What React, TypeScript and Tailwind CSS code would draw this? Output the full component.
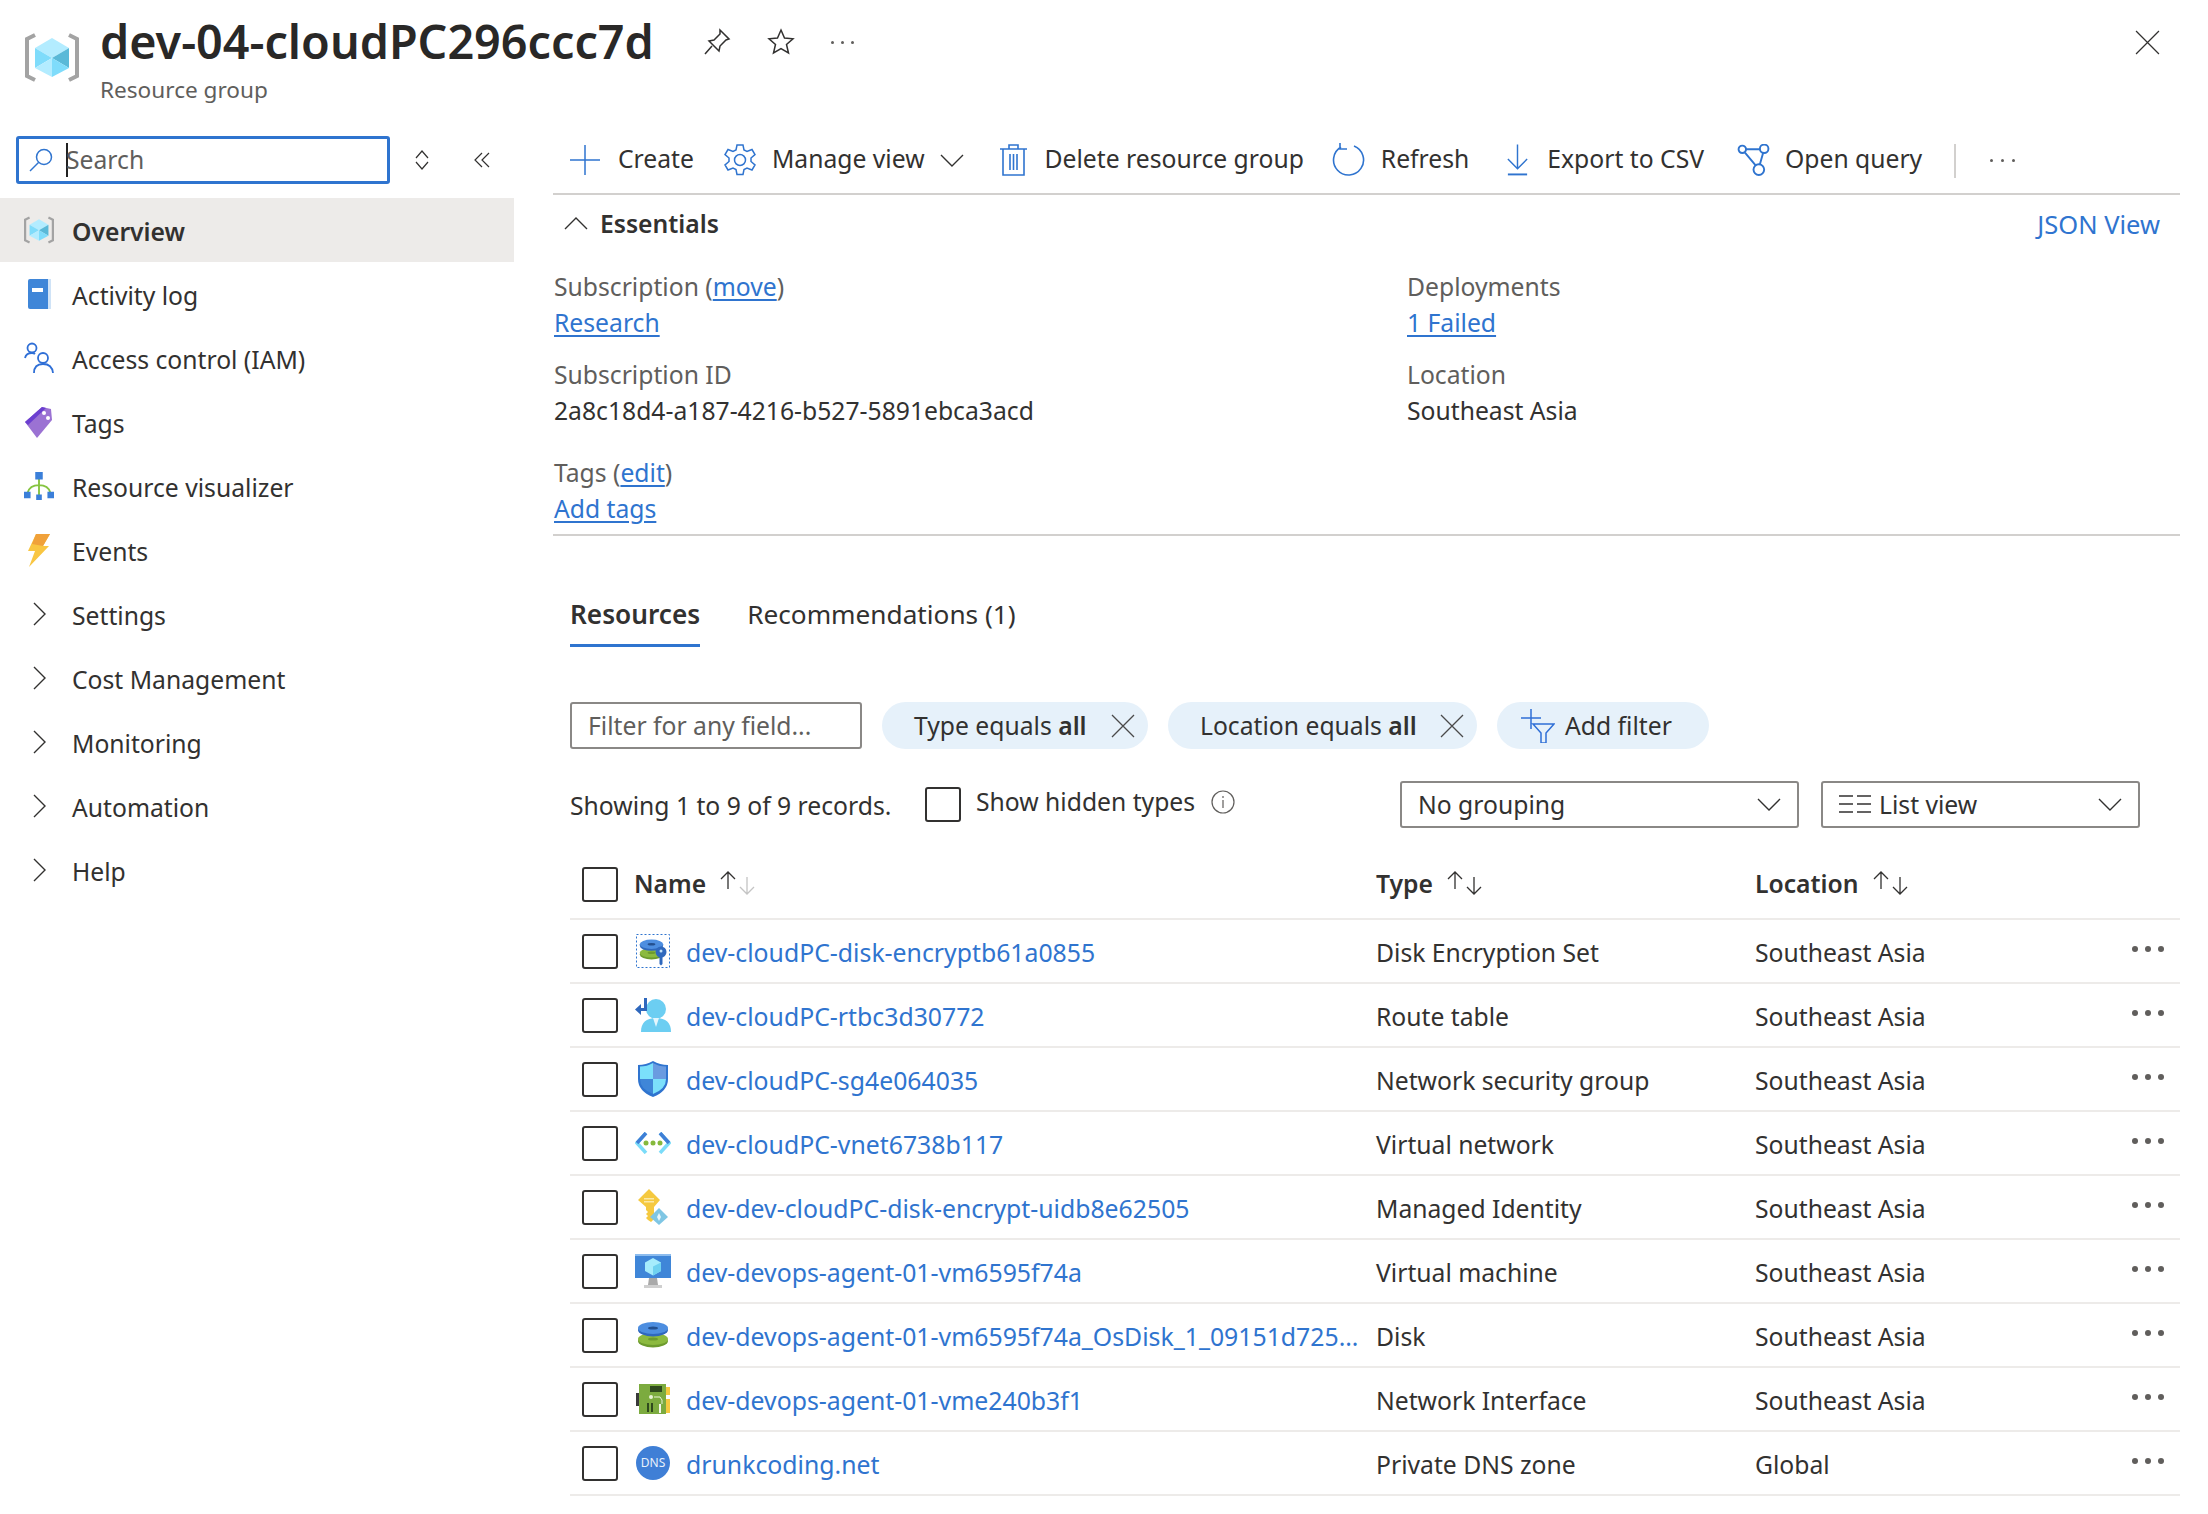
import type { ReactNode } from "react";

const blue = "#2f74cf";

const Chevron = ({ dir, className }: { dir: "right" | "down" | "up"; className: string }) => {
  const d = dir === "right" ? "M1 1l11 11L1 23" : dir === "down" ? "M1 1l11 11L23 1" : "M1 12L12 1l11 11";
  const box = dir === "right" ? "0 0 13 24" : "0 0 24 13";
  return (
    <svg viewBox={box} className={className} fill="none" stroke="currentColor" strokeWidth="1.4">
      <path d={d} />
    </svg>
  );
};

const GroupIcon = ({ className }: { className: string }) => (
  <svg viewBox="0 0 54 49" className={className}>
    <path d="M10 2L2 6v37l8 4M44 2l8 4v37l-8 4" fill="none" stroke="#a3a3a3" strokeWidth="4" />
    <path d="M27 5l17 10-17 10-17-10z" fill="#b3ecff" />
    <path d="M44 15v20L27 25z" fill="#5ab9d8" />
    <path d="M10 15v20l17-10z" fill="#7fdcfb" />
    <path d="M10 35l17 9V25z" fill="#b3ecff" />
    <path d="M44 35l-17 9V25z" fill="#7fdcfb" />
  </svg>
);

const BookIcon = () => (
  <svg viewBox="0 0 24 30" className="h-[30px] w-[24px]">
    <path d="M1 2q0-2 2-2h20v30H3q-2 0-2-2z" fill="#3f86d8" />
    <path d="M21 0h3v30h-3z" fill="#cfe3f7" />
    <path d="M5 9h11v4H5z" fill="#fff" />
  </svg>
);

const PeopleIcon = () => (
  <svg viewBox="0 0 30 32" className="h-[32px] w-[30px]" fill="none" stroke="#2f6fd6" strokeWidth="1.8">
    <circle cx="8" cy="6" r="4.5" />
    <circle cx="19" cy="16" r="5" />
    <path d="M1 16q1-5 7-5 2 0 3 1M10 31q0-9 9-9t10 9" />
  </svg>
);

const TagIcon = () => (
  <svg viewBox="0 0 28 31" className="h-[31px] w-[28px]">
    <path d="M0 15L17 0l9 2 1 11-15 18z" fill="#9b72d3" />
    <path d="M0 15L17 0l4 1L3 18z" fill="#6b3fd0" />
    <circle cx="19" cy="6" r="2" fill="#fff" />
    <circle cx="23" cy="11" r="2" fill="#fff" />
  </svg>
);

const VisualizerIcon = () => (
  <svg viewBox="0 0 32 30" className="h-[30px] w-[32px]">
    <path d="M16 6v20M4 22q2-8 12-8t12 8" fill="none" stroke="#86c440" strokeWidth="2" />
    <path d="M12 0h8v8h-8zM0 21h7v7H0zM25 21h7v7h-7zM13 24h6v6h-6z" fill="#3b7fd9" />
  </svg>
);

const BoltIcon = () => (
  <svg viewBox="0 0 22 33" className="h-[33px] w-[22px]">
    <path d="M8 0h14l-7 12h6L1 33l6-16H0z" fill="#f9c642" />
    <path d="M8 0h14l-7 12-11-2z" fill="#f0a13a" />
  </svg>
);

const nav: { label: string; icon?: ReactNode; active?: boolean }[] = [
  { label: "Overview", icon: <GroupIcon className="h-[28px] w-[30px]" />, active: true },
  { label: "Activity log", icon: <BookIcon /> },
  { label: "Access control (IAM)", icon: <PeopleIcon /> },
  { label: "Tags", icon: <TagIcon /> },
  { label: "Resource visualizer", icon: <VisualizerIcon /> },
  { label: "Events", icon: <BoltIcon /> },
  { label: "Settings" },
  { label: "Cost Management" },
  { label: "Monitoring" },
  { label: "Automation" },
  { label: "Help" },
];

const DiskShape = () => (
  <>
    <ellipse cx="16" cy="21" rx="15" ry="6.5" fill="#6d9b2e" />
    <ellipse cx="16" cy="19" rx="15" ry="6" fill="#8cba3f" />
    <ellipse cx="16" cy="19" rx="5" ry="1.6" fill="#6d9b2e" />
    <ellipse cx="16" cy="10" rx="15" ry="6.5" fill="#2f68bd" />
    <ellipse cx="16" cy="8" rx="15" ry="6" fill="#4d8ee0" />
    <ellipse cx="16" cy="8" rx="5" ry="1.6" fill="#24508f" />
  </>
);

const rowIcons: ReactNode[] = [
  <svg viewBox="0 0 34 34" className="h-[34px] w-[34px]" key="enc">
    <rect x="0.5" y="0.5" width="33" height="33" fill="none" stroke="#2f74cf" strokeDasharray="2 2" />
    <g transform="translate(3 4) scale(0.78)">
      <DiskShape />
    </g>
    <circle cx="25" cy="18" r="5.5" fill="#2f68bd" />
    <path d="M23.5 22h3v8l-1.5 1.5-1.5-1.5z" fill="#2f68bd" />
    <circle cx="25" cy="17" r="1.5" fill="#bfe0fa" />
  </svg>,
  <svg viewBox="0 0 36 34" className="h-[34px] w-[36px]" key="rt">
    <circle cx="21" cy="11" r="10" fill="#6ccef2" />
    <path d="M6 34q0-14 15-14t15 14z" fill="#6ccef2" />
    <path d="M18 20h6l-3 9z" fill="#e4f6fd" />
    <path d="M9 0h3v13H6v4l-6-5.500 6-5.500v4h3z" fill="#2f68bd" />
  </svg>,
  <svg viewBox="0 0 32 36" className="h-[36px] w-[32px]" key="nsg">
    <path d="M16 0q7 4 15 4v14q0 12-15 18Q1 30 1 18V4q8 0 15-4z" fill="#2f74cf" />
    <path d="M16 2v16H3V5.500q7 0 13-3.500zM16 18h13q0 10-13 15z" fill="#7be0fb" />
    <path d="M16 2q6 3.500 13 3.500V18H16z" fill="#6a9be0" />
    <path d="M16 18v15Q3 28 3 18z" fill="#3f86d8" />
  </svg>,
  <svg viewBox="0 0 36 22" className="h-[22px] w-[36px]" key="vnet">
    <path d="M11 1L2 11l9 10" fill="none" stroke="#7bdcf9" strokeWidth="3.500" />
    <path d="M25 1l9 10-9 10" fill="none" stroke="#7bdcf9" strokeWidth="3.500" />
    <path d="M11 1L2 11M25 1l9 10" fill="none" stroke="#3f7fd6" strokeWidth="3.500" />
    <circle cx="11" cy="11" r="2.500" fill="#86b93c" />
    <circle cx="18" cy="11" r="2.500" fill="#86b93c" />
    <circle cx="25" cy="11" r="2.500" fill="#86b93c" />
  </svg>,
  <svg viewBox="0 0 30 36" className="h-[36px] w-[30px]" key="mi">
    <path d="M11 0l11 11-6 7v12l-3 3-3-2-2-2 2-2-2-2 2-2-2-2v-3L0 11z" fill="#f5c93f" />
    <path d="M6 9h10v1.500H6zM6 12h10v1.500H6z" fill="#fbe9a6" />
    <path d="M21 19l9 9-9 8-9-8z" fill="#7fc6e4" />
    <path d="M21 24l-2 4 2 4 2-4z" fill="#e6f6fc" />
  </svg>,
  <svg viewBox="0 0 36 34" className="h-[34px] w-[36px]" key="vm">
    <path d="M0 0h36v24H0z" fill="#3f86d8" />
    <path d="M0 0h36v2H0z" fill="#8cbcee" />
    <path d="M18 4l8 4.500v8.500l-8 4.500-8-4.500V8.500z" fill="#a5ecfc" />
    <path d="M18 12.500l8-4V17l-8 4.500z" fill="#6fd2f0" />
    <path d="M14 24h8l1 7h-10z" fill="#a9a9a9" />
    <path d="M9 31h18v3H9z" fill="#cfcfcf" />
  </svg>,
  <svg viewBox="0 0 32 30" className="h-[30px] w-[32px]" key="disk">
    <DiskShape />
  </svg>,
  <svg viewBox="0 0 34 30" className="h-[30px] w-[34px]" key="nic">
    <path d="M0 9h4v13H0z" fill="#3a3a3a" />
    <path d="M3 0h27v30H3z" fill="#7cab3f" />
    <path d="M30 3h4v8h-4zM30 15h4v14h-4z" fill="#f5c93f" />
    <path d="M14 2h12v6H14zM11 19h2v9h-2zM15 19h2v9h-2z" fill="#2f4a1d" />
    <circle cx="15" cy="13" r="2" fill="#e8f2d6" />
    <path d="M23 20h2v9h-2z" fill="#f3f6ec" />
    <path d="M18 13h6l2 3v4" fill="none" stroke="#e8f2d6" strokeWidth="1" />
  </svg>,
  <div key="dns" className="flex h-[34px] w-[34px] items-center justify-center rounded-full bg-[#3f7fd6] text-[12px] text-[#e8f1fb]">
    DNS
  </div>,
];

const rows = [
  ["dev-cloudPC-disk-encryptb61a0855", "Disk Encryption Set", "Southeast Asia"],
  ["dev-cloudPC-rtbc3d30772", "Route table", "Southeast Asia"],
  ["dev-cloudPC-sg4e064035", "Network security group", "Southeast Asia"],
  ["dev-cloudPC-vnet6738b117", "Virtual network", "Southeast Asia"],
  ["dev-dev-cloudPC-disk-encrypt-uidb8e62505", "Managed Identity", "Southeast Asia"],
  ["dev-devops-agent-01-vm6595f74a", "Virtual machine", "Southeast Asia"],
  ["dev-devops-agent-01-vm6595f74a_OsDisk_1_09151d7253a04c0f", "Disk", "Southeast Asia"],
  ["dev-devops-agent-01-vme240b3f1", "Network Interface", "Southeast Asia"],
  ["drunkcoding.net", "Private DNS zone", "Global"],
];

const Check = () => <div className="h-[35px] w-[36px] shrink-0 rounded-[3px] border-[2px] border-[#323130]" />;

const Link = ({ children }: { children: ReactNode }) => <span className="text-[#2f74cf] underline underline-offset-[3px]">{children}</span>;

const Sort = ({ dim }: { dim?: boolean }) => (
  <svg viewBox="0 0 36 24" className="h-[24px] w-[36px]" fill="none" strokeWidth="1.300">
    <path d="M8 18V1M1 8l7-7 7 7" stroke="#323130" />
    <path d="M27 6v17M20 16l7 7 7-7" stroke={dim ? "#c4c4c4" : "#323130"} />
  </svg>
);

const ToolItem = ({ icon, label, gap }: { icon: ReactNode; label: string; gap: string }) => (
  <div className={`flex items-center ${gap}`}>
    {icon}
    <span className="-mt-[3px]">{label}</span>
  </div>
);

const Chip = ({ label, width }: { label: string; width: string }) => (
  <div className={`flex h-[47px] items-center justify-between rounded-[24px] bg-[#e6f1fa] pl-[32px] pr-[13px] ${width}`}>
    <span>
      {label} equals <b className="font-semibold">all</b>
    </span>
    <svg viewBox="0 0 24 24" className="h-[24px] w-[24px]" fill="none" stroke="#4a4a4a" strokeWidth="1.300">
      <path d="M1 1l22 22M23 1L1 23" />
    </svg>
  </div>
);

const Select = ({ children, width }: { children: ReactNode; width: string }) => (
  <div className={`flex h-[47px] items-center justify-between rounded-[3px] border-[2px] border-[#8a8886] pl-[16px] pr-[15px] ${width}`}>
    <div className="flex items-center gap-[8px]">{children}</div>
    <Chevron dir="down" className="h-[13px] w-[26px] text-[#323130]" />
  </div>
);

export default function App() {
  return (
    <div className="h-[1514px] w-[2208px] overflow-hidden bg-white font-['Noto_Sans',sans-serif] text-[24.7px] text-[#323130]">
      {/* Header */}
      <header className="flex h-[136px] pl-[25px] pr-[48px]">
        <GroupIcon className="mt-[33px] h-[49px] w-[54px]" />
        <div className="ml-[21px] pt-[10px]">
          <h1 className="text-[46.7px] font-semibold leading-[62px] text-[#292827]">dev-04-cloudPC296ccc7d</h1>
          <p className="pt-[3px] text-[22.6px] leading-[30px] text-[#605e5c]">Resource group</p>
        </div>
        <div className="ml-[49px] mt-[27px] flex h-[30px] items-center gap-[36px] text-[#323130]">
          <svg viewBox="0 0 28 28" className="h-[28px] w-[28px]" fill="none" stroke="currentColor" strokeWidth="1.500">
            <path d="M17 2l9 9-3 1-6 6-1 5-10-10 5-1 6-6zM9 18l-7 8" />
          </svg>
          <svg viewBox="0 0 28 28" className="h-[28px] w-[28px]" fill="none" stroke="currentColor" strokeWidth="1.500">
            <path d="M14 2l3.500 8 8.500.800-6.500 5.600 2 8.600-7.500-4.500L6.500 25l2-8.600L2 10.800l8.500-.800z" />
          </svg>
          <div className="flex gap-[7px]">
            <span className="h-[3px] w-[3px] rounded-full bg-[#605e5c]" />
            <span className="h-[3px] w-[3px] rounded-full bg-[#605e5c]" />
            <span className="h-[3px] w-[3px] rounded-full bg-[#605e5c]" />
          </div>
        </div>
        <svg viewBox="0 0 24 24" className="ml-auto mt-[30px] h-[25px] w-[25px]" fill="none" stroke="#323130" strokeWidth="1.200">
          <path d="M1 1l22 22M23 1L1 23" />
        </svg>
      </header>

      <div className="flex">
        {/* Sidebar */}
        <aside className="w-[514px] shrink-0">
          <div className="flex items-center pl-[16px]">
            <div className="flex h-[48px] w-[374px] items-center rounded-[3px] border-[3px] border-[#2f74cf] pl-[10px]">
              <svg viewBox="0 0 24 24" className="h-[24px] w-[24px]" fill="none" stroke="#2f74cf" strokeWidth="1.500">
                <circle cx="15" cy="9" r="7.500" />
                <path d="M9.500 14.500L1 23" />
              </svg>
              <span className="ml-[13px] h-[34px] w-[2px] bg-[#222]" />
              <span className="-ml-[2px] text-[#605e5c]">Search</span>
            </div>
            <svg viewBox="0 0 14 20" className="ml-[25px] h-[20px] w-[14px]" fill="none" stroke="#323130" strokeWidth="1.200">
              <path d="M1 8l6-7 6 7M1 12l6 7 6-7" />
            </svg>
            <svg viewBox="0 0 16 16" className="ml-[45px] h-[16px] w-[16px]" fill="none" stroke="#323130" strokeWidth="1.200">
              <path d="M8 1L1 8l7 7M15 1L8 8l7 7" />
            </svg>
          </div>
          <nav className="mt-[14px]">
            {nav.map((item) => (
              <div
                key={item.label}
                className={item.active ? "flex h-16 items-center bg-[#edebe9] pl-[24px] font-semibold" : "flex h-16 items-center pl-[24px]"}
              >
                <div className="flex w-[30px] items-center justify-center">
                  {item.icon ?? <Chevron dir="right" className="h-[24px] w-[13px] text-[#323130]" />}
                </div>
                <span className="ml-[18px] pt-[3px]">{item.label}</span>
              </div>
            ))}
          </nav>
        </aside>

        {/* Main */}
        <main className="ml-[39px] w-[1627px] -mt-[8px]">
          <div className="flex h-[67px] items-center border-b-[2px] border-[#d2d0ce] pl-[17px]">
            <ToolItem
              gap="gap-[18px]"
              label="Create"
              icon={
                <svg viewBox="0 0 30 30" className="h-[30px] w-[30px]" fill="none" stroke={blue} strokeWidth="1.500">
                  <path d="M15 0v30M0 15h30" />
                </svg>
              }
            />
            <div className="ml-[29px] flex items-center">
              <ToolItem
                gap="gap-[15px]"
                label="Manage view"
                icon={
                  <svg viewBox="0 0 34 34" className="h-[34px] w-[34px]" fill="none" stroke={blue} strokeWidth="1.500">
                    <circle cx="17" cy="17" r="5.500" />
                    <path d="M14 2h6l1 5 3 1.500 5-2 3 5-4 3.500v3.500l4 3.500-3 5-5-2-3 1.500-1 5h-6l-1-5-3-1.500-5 2-3-5 4-3.500v-3.500l-4-3.500 3-5 5 2 3-1.500z" />
                  </svg>
                }
              />
              <Chevron dir="down" className="ml-[15px] h-[13px] w-[24px] text-[#323130]" />
            </div>
            <div className="ml-[36px]">
              <ToolItem
                gap="gap-[18px]"
                label="Delete resource group"
                icon={
                  <svg viewBox="0 0 27 32" className="h-[32px] w-[27px]" fill="none" stroke={blue} strokeWidth="1.600">
                    <path d="M0 5h27M9 5V1h9v4M3 5v26h21V5M10 10v16M13.500 10v16M17 10v16" />
                  </svg>
                }
              />
            </div>
            <div className="ml-[28px]">
              <ToolItem
                gap="gap-[15px]"
                label="Refresh"
                icon={
                  <svg viewBox="0 0 34 34" className="h-[34px] w-[34px]" fill="none" stroke={blue} strokeWidth="1.600">
                    <path d="M22 3a15 15 0 1 1-13 1M8 0v6h7" />
                  </svg>
                }
              />
            </div>
            <div className="ml-[36px]">
              <ToolItem
                gap="gap-[17px]"
                label="Export to CSV"
                icon={
                  <svg viewBox="0 0 26 32" className="h-[32px] w-[25px]" fill="none" stroke={blue} strokeWidth="1.500">
                    <path d="M13 0v24M3 15l10 10 10-10" />
                    <path d="M3 31h20" strokeWidth="2" />
                  </svg>
                }
              />
            </div>
            <div className="ml-[33px]">
              <ToolItem
                gap="gap-[15px]"
                label="Open query"
                icon={
                  <svg viewBox="0 0 30 30" className="h-[32px] w-[33px]" fill="none" stroke={blue} strokeWidth="1.800">
                    <circle cx="4.500" cy="5" r="3.500" />
                    <circle cx="25" cy="4.500" r="4" />
                    <circle cx="20" cy="24" r="5" />
                    <path d="M8 5h13M7 8l10 12M24 8.500l-3 10.500" />
                  </svg>
                }
              />
            </div>
            <div className="ml-[32px] h-[34px] w-[2px] bg-[#d2d0ce]" />
            <div className="ml-[34px] flex gap-[8px]">
              <span className="h-[3px] w-[3px] rounded-full bg-[#605e5c]" />
              <span className="h-[3px] w-[3px] rounded-full bg-[#605e5c]" />
              <span className="h-[3px] w-[3px] rounded-full bg-[#605e5c]" />
            </div>
          </div>

          {/* Essentials */}
          <div className="flex h-[58px] items-center justify-between pl-[11px] pr-[20px]">
            <div className="flex items-center gap-[12px] font-semibold">
              <Chevron dir="up" className="h-[13px] w-[24px] text-[#323130]" />
              <span>Essentials</span>
            </div>
            <span className="text-[25.5px] text-[#2f74cf]">JSON View</span>
          </div>
          <div className="border-b-[2px] border-[#d2d0ce] pb-[7px] pl-[1px] pt-[16px] leading-[36px]">
            <div className="grid grid-cols-[853px_1fr] gap-y-[16px]">
              <div>
                <div className="text-[#605e5c]">
                  Subscription (<Link>move</Link>)
                </div>
                <Link>Research</Link>
              </div>
              <div>
                <div className="text-[#605e5c]">Deployments</div>
                <Link>1 Failed</Link>
              </div>
              <div>
                <div className="text-[#605e5c]">Subscription ID</div>
                <div>2a8c18d4-a187-4216-b527-5891ebca3acd</div>
              </div>
              <div>
                <div className="text-[#605e5c]">Location</div>
                <div>Southeast Asia</div>
              </div>
            </div>
            <div className="mt-[26px] text-[#605e5c]">
              Tags (<Link>edit</Link>)
            </div>
            <Link>Add tags</Link>
          </div>

          <div className="pl-[17px]">
            {/* Tabs */}
            <div className="mt-[59px] flex gap-[47px] text-[26.2px]">
              <div className="h-[52px] border-b-[3px] border-[#2f74cf] font-semibold">Resources</div>
              <div>Recommendations (1)</div>
            </div>

            {/* Filters */}
            <div className="mt-[55px] flex items-center gap-[20px]">
              <div className="flex h-[47px] w-[292px] items-center rounded-[3px] border-[2px] border-[#8a8886] pl-[16px] text-[#605e5c]">
                Filter for any field...
              </div>
              <Chip label="Type" width="w-[266px]" />
              <Chip label="Location" width="w-[309px]" />
              <div className="flex h-[47px] w-[212px] items-center gap-[10px] rounded-[24px] bg-[#e6f1fa] pl-[22px]">
                <svg viewBox="0 0 36 34" className="h-[34px] w-[36px]" fill="none" stroke="#2f6fd6" strokeWidth="1.500">
                  <path d="M12 0v20M2 9h20M14 15h21l-8 9v10h-5V24z" />
                </svg>
                <span>Add filter</span>
              </div>
            </div>

            <div className="mt-[32px] flex h-[47px] items-center">
              <span className="w-[355px] pt-[2px]">Showing 1 to 9 of 9 records.</span>
              <Check />
              <span className="-mt-[5px] ml-[15px]">Show hidden types</span>
              <svg viewBox="0 0 24 24" className="-mt-[5px] ml-[16px] h-[24px] w-[24px]" fill="none" stroke="#605e5c" strokeWidth="1.200">
                <circle cx="12" cy="12" r="11" />
                <path d="M12 10v8M12 6v2" />
              </svg>
              <div className="ml-auto flex gap-[22px] pr-[40px]">
                <Select width="w-[399px]">
                  <span>No grouping</span>
                </Select>
                <Select width="w-[319px]">
                  <svg viewBox="0 0 32 20" className="h-[20px] w-[32px]" fill="none" stroke="#323130" strokeWidth="1.500">
                    <path d="M0 2h14M18 2h14M0 10h14M18 10h14M0 18h14M18 18h14" />
                  </svg>
                  <span>List view</span>
                </Select>
              </div>
            </div>

            {/* Table */}
            <div className="mt-[24px] grid h-[68px] grid-cols-[806px_379px_1fr] items-center border-b-[2px] border-[#edebe9] font-semibold">
              <div className="flex items-center pl-[12px]">
                <Check />
                <span className="ml-[16px] -mt-[2px]">Name</span>
                <span className="ml-[14px] -mt-[4px]">
                  <Sort dim />
                </span>
              </div>
              <div className="flex items-center gap-[14px]">
                <span className="-mt-[2px]">Type</span>
                <span className="-mt-[4px]">
                  <Sort />
                </span>
              </div>
              <div className="flex items-center gap-[14px]">
                <span className="-mt-[2px]">Location</span>
                <span className="-mt-[4px]">
                  <Sort />
                </span>
              </div>
            </div>
            {rows.map((row, i) => (
              <div key={row[0]} className="grid h-16 grid-cols-[806px_379px_1fr] items-center border-b-[2px] border-[#edebe9]">
                <div className="flex items-center pl-[12px]">
                  <Check />
                  <div className="ml-[16px] flex w-[38px] shrink-0 items-center justify-center">{rowIcons[i]}</div>
                  <span className="ml-[14px] w-[680px] truncate pt-[4px] text-[24.8px] text-[#2f74cf]">{row[0]}</span>
                </div>
                <span className="pt-[4px]">{row[1]}</span>
                <div className="flex items-center justify-between pr-[16px]">
                  <span className="pt-[4px]">{row[2]}</span>
                  <div className="-mt-[3px] flex gap-[7px]">
                    <span className="h-[6px] w-[6px] rounded-full bg-[#605e5c]" />
                    <span className="h-[6px] w-[6px] rounded-full bg-[#605e5c]" />
                    <span className="h-[6px] w-[6px] rounded-full bg-[#605e5c]" />
                  </div>
                </div>
              </div>
            ))}
          </div>
        </main>
      </div>
    </div>
  );
}
